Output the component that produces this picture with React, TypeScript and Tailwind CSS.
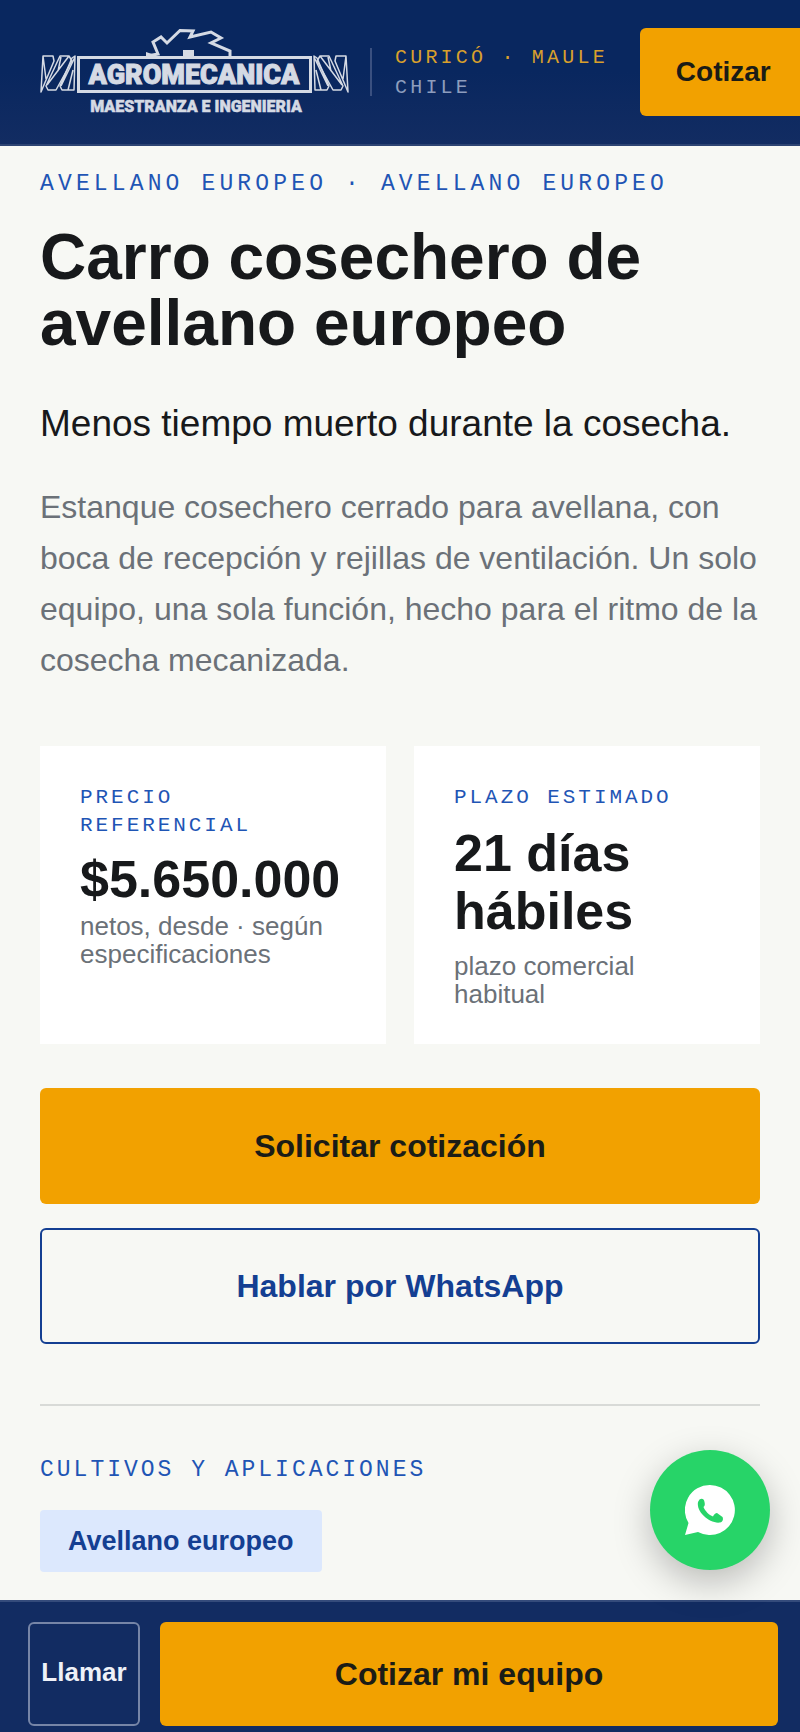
import React from "react";

const sans = "font-['Liberation_Sans',Arial,sans-serif]";
const mono = "font-['Liberation_Mono','Courier_New',monospace]";

function Strands() {
  return (
    <>
      <path d="M3 28H13L14 33L1 64ZM3 28L6 51" />
      <path d="M20 28H29L32 33L16 62H8L6 58ZM29 28L7 57M21 29L18 43" />
      <path d="M32 30L35 28L34 62H22L20 58ZM35 29L21 58M33 42L28 62" />
    </>
  );
}

function Logo() {
  return (
    <svg viewBox="0 0 309 88" className="h-[88px] w-[309px] shrink-0 text-[#d5dae4]" fill="none" stroke="currentColor" role="img" aria-label="Agromecanica, Maestranza e Ingenieria">
      <path strokeWidth="3" d="M107 28L118 26L113 14L121 9L127 15L140 2.500L153 3L150 9L171 4L181 10L171 15L190 23V29" />
      <path fill="currentColor" stroke="none" d="M143 22h11v6h-11zM106 24l9 3v2h-9z" />
      <rect x="38.500" y="29.500" width="232" height="34" strokeWidth="3" />
      <g strokeWidth="1.500" strokeLinejoin="round">
        <Strands />
      </g>
      <g strokeWidth="1.500" strokeLinejoin="round" transform="translate(309 0) scale(-1 1)">
        <Strands />
      </g>
      <g fill="currentColor" stroke="currentColor" className="font-['Roboto','Liberation_Sans',sans-serif] font-black">
        <text x="154" y="56" fontSize="27" textAnchor="middle" strokeWidth="1">AGROMECANICA</text>
        <text x="156" y="84" fontSize="16" textAnchor="middle" strokeWidth="0.500">MAESTRANZA E INGENIERIA</text>
      </g>
    </svg>
  );
}

function Header() {
  return (
    <header className="sticky top-0 z-10 flex items-center overflow-hidden border-b-2 border-[#2d4473] bg-linear-to-b from-[#09275f] from-50% to-[#122c62] py-7 pl-10">
      <Logo />
      <div className="ml-[21px] h-12 w-0.5 shrink-0 bg-[#3a5080]" />
      <p className={`${mono} ml-[23px] shrink-0 pt-0.5 text-[20px] leading-[30px] tracking-[0.16em] whitespace-nowrap`}>
        <span className="block text-[#d9a02c]">CURICÓ · MAULE</span>
        <span className="block text-[#8d9dbd]">CHILE</span>
      </p>
      <a href="#cotizar" className="ml-8 flex h-[88px] shrink-0 items-center rounded-md bg-[#f2a100] px-9 text-[28px] font-bold text-[#1b1c16]">
        Cotizar
      </a>
    </header>
  );
}

export default function App() {
  return (
    <div className={`${sans} min-h-screen bg-[#f7f8f4] pb-40 text-[#17191b]`}>
      <Header />
      <main className="px-10 pt-6">
        <p className={`${mono} text-[23px] leading-7 tracking-[0.18em] text-[#1f55b5]`}>AVELLANO EUROPEO · AVELLANO EUROPEO</p>
        <h1 className="mt-[26px] max-w-[640px] text-[64px] leading-[66px] font-bold">Carro cosechero de avellano europeo</h1>
        <p className="mt-11 text-[37px] leading-[48px]">Menos tiempo muerto durante la cosecha.</p>
        <p className="mt-[34px] text-[32px] leading-[51px] text-[#6b7178]">
          Estanque cosechero cerrado para avellana, con boca de recepción y rejillas de ventilación. Un solo equipo, una sola función, hecho para el ritmo de la cosecha mecanizada.
        </p>

        <dl className="mt-[60px] grid grid-cols-2 gap-7">
          <div className="min-h-[298px] bg-white px-10 pt-[38px] pb-[34px]">
            <dt className={`${mono} text-[21px] leading-7 tracking-[0.14em] text-[#1f55b5]`}>PRECIO REFERENCIAL</dt>
            <dd className="mt-3 text-[52px] leading-[54px] font-bold">$5.650.000</dd>
            <dd className="mt-1.5 text-[26px] leading-7 text-[#6b7178]">netos, desde · según especificaciones</dd>
          </div>
          <div className="min-h-[298px] bg-white px-10 pt-[38px] pb-[34px]">
            <dt className={`${mono} text-[21px] leading-7 tracking-[0.14em] text-[#1f55b5]`}>PLAZO ESTIMADO</dt>
            <dd className="mt-3 text-[52px] leading-[58px] font-bold">21 días hábiles</dd>
            <dd className="mt-3 text-[26px] leading-7 text-[#6b7178]">plazo comercial habitual</dd>
          </div>
        </dl>

        <div className="mt-11 flex flex-col gap-6 text-[32px] font-bold">
          <a href="#cotizar" className="flex h-[116px] items-center justify-center rounded-md bg-[#f2a100] text-[#1b1c16]">Solicitar cotización</a>
          <a href="#whatsapp" className="flex h-[116px] items-center justify-center rounded-md border-2 border-[#143f92] text-[#143f92]">Hablar por WhatsApp</a>
        </div>

        <section className="mt-[60px] border-t-2 border-[#d8dad7] pt-[50px]">
          <h2 className={`${mono} text-[23px] leading-7 tracking-[0.13em] text-[#1f55b5]`}>CULTIVOS Y APLICACIONES</h2>
          <ul className="mt-[26px] flex flex-wrap gap-3">
            <li className="flex h-[62px] items-center rounded bg-[#dce8fd] px-7 text-[27px] font-bold text-[#143f92]">Avellano europeo</li>
          </ul>
        </section>
      </main>

      <a href="#whatsapp" aria-label="WhatsApp" className="fixed right-[30px] bottom-[162px] z-20 flex size-[120px] items-center justify-center rounded-full bg-[#27d468] text-white shadow-[0_12px_36px_rgba(0,0,0,0.25)]">
        <svg viewBox="0 0 50 50" className="size-[50px]">
          <path fill="currentColor" d="M25 0A25 25 0 1 1 13 47L0 50L3.500 38A25 25 0 0 1 25 0z" />
          <path fill="#27d468" d="M14.500 14.500C17 13 19 14 19.500 17C20 19 20 21 18.500 22C20 26 24 30 28 31.500C29 29.500 30.500 28 32 28L37.500 32C38.500 34 38 37 35 37.500C25 39 11 27 13 17Z" />
        </svg>
      </a>

      <nav aria-label="Acciones" className="fixed inset-x-0 bottom-0 z-10 flex gap-5 border-t-2 border-[#344b7b] bg-[#122c62] pt-5 pr-[22px] pb-1.5 pl-7 font-bold">
        <a href="#llamar" className="flex h-[104px] w-28 items-center justify-center rounded-md border-2 border-[#7685a7] pb-1 text-[26px] text-[#eef1f8]">Llamar</a>
        <a href="#cotizar" className="flex h-[104px] flex-1 items-center justify-center rounded-md bg-[#f2a100] text-[32px] text-[#1b1c16]">Cotizar mi equipo</a>
      </nav>
    </div>
  );
}
